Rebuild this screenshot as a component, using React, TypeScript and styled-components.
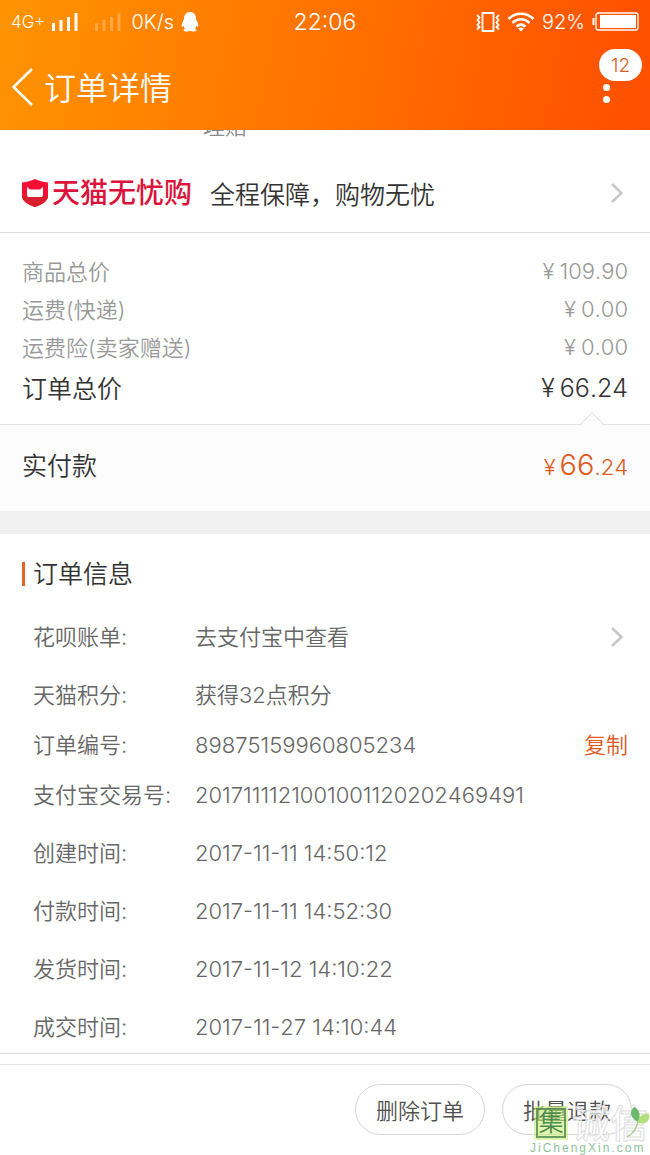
import React from 'react';
import styled, { createGlobalStyle } from 'styled-components';

const GlobalStyle = createGlobalStyle`
  * { box-sizing: border-box; }
  body {
    margin: 0;
    background: #fff;
    color: #666;
    font: 350 22px/30px Inter, "Noto Sans CJK SC", sans-serif;
    font-kerning: none;
  }
  button { font: inherit; font-kerning: inherit; color: inherit; background: none; border: 0; padding: 0; cursor: pointer; }
  h1, h2, dl, dd, dt, p { margin: 0; font-weight: inherit; }
`;

const Page = styled.div`
  position: relative;
  display: flex;
  flex-direction: column;
  min-height: 100vh;
`;

const Header = styled.header`
  background: linear-gradient(100deg, #ff9402 0%, #ff7200 50%, #ff4e00 100%);
  color: #fff;
`;

const StatusBar = styled.div`
  display: grid;
  grid-template-columns: 1fr auto 1fr;
  align-items: center;
  height: 44px;
  padding: 0 11px;
  font-size: 20px;
`;

const StatusGroup = styled.div<{ $end?: boolean }>`
  display: flex;
  align-items: center;
  gap: 7px;
  justify-content: ${(p) => (p.$end ? 'flex-end' : 'flex-start')};
`;

const Network = styled.span`
  font-size: 17px;
`;

const SignalPair = styled.span`
  display: flex;
  gap: 17px;
  margin-right: 3px;
`;

const Clock = styled.time`
  font-size: 23px;
`;

const NavBar = styled.div`
  display: flex;
  align-items: center;
  height: 86px;
  padding: 0 8px 0 11px;
`;

const BackButton = styled.button`
  display: flex;
  margin-right: 10px;
`;

const Title = styled.h1`
  flex: 1;
  padding-top: 4px;
  font-size: 32px;
  line-height: 40px;
`;

const MenuButton = styled.button`
  position: relative;
  display: flex;
  flex-direction: column;
  align-items: flex-start;
  justify-content: center;
  gap: 5px;
  width: 43px;
  height: 76px;
  padding: 12px 0 0 4px;
`;

const Dot = styled.i`
  flex: none;
  width: 7px;
  height: 7px;
  border-radius: 50%;
  background: #fff;
`;

const Badge = styled.span`
  position: absolute;
  top: 0;
  left: 0;
  width: 43px;
  height: 32px;
  border-radius: 16px;
  background: #fff;
  color: #d9601f;
  font-size: 19px;
  line-height: 33px;
`;

const ClippedRow = styled.div`
  display: flex;
  align-items: flex-end;
  height: 11px;
  margin-bottom: 15px;
  padding-left: 203px;
  overflow: hidden;
  color: #8a8a8a;
`;

const Promise = styled.a`
  display: flex;
  align-items: center;
  height: 77px;
  padding: 0 27px 2px 22px;
  border-bottom: 1px solid #ddd;
  color: #333;
  font-size: 25px;
  text-decoration: none;
`;

const Brand = styled.span`
  display: flex;
  align-items: center;
  gap: 4px;
  margin-right: 18px;
  color: #dc143c;
  font-size: 28px;
  font-weight: 500;
`;

const Grow = styled.span`
  flex: 1;
  padding-top: 4px;
`;

const Totals = styled.dl`
  padding: 20px 22px 13px;
`;

const TotalRow = styled.div<{ $strong?: boolean }>`
  display: flex;
  justify-content: space-between;
  align-items: center;
  height: ${(p) => (p.$strong ? 44 : 38)}px;
  color: ${(p) => (p.$strong ? '#333' : '#999')};
  font-size: ${(p) => (p.$strong ? 25 : 22)}px;
`;

const Price = styled.dd`
  display: flex;
  align-items: baseline;
  gap: 5px;
  padding-bottom: 2px;
`;

const Paid = styled.section`
  position: relative;
  display: flex;
  justify-content: space-between;
  align-items: center;
  height: 88px;
  padding: 0 22px 4px;
  border-top: 1px solid #e4e4e4;
  border-bottom: 1px solid #f0f0f0;
  background: #fcfcfc;
  color: #333;
  font-size: 25px;
`;

const Notch = styled.svg`
  position: absolute;
  top: -13px;
  right: 46px;
`;

const PaidPrice = styled.p`
  display: flex;
  align-items: baseline;
  color: #e0591c;
  font-size: 22px;
`;

const PaidWhole = styled.span`
  margin-left: 4px;
  font-size: 29px;
`;

const Divider = styled.div`
  height: 22px;
  background: #f0f0f0;
`;

const Info = styled.section`
  padding: 0 22px;
  border-bottom: 1px solid #d8d8d8;
`;

const InfoTitle = styled.h2`
  display: flex;
  align-items: center;
  gap: 8px;
  height: 79px;
  color: #333;
  font-size: 25px;

  &::before {
    content: '';
    width: 3px;
    height: 24px;
    background: #e8632a;
  }
`;

const InfoList = styled.dl`
  display: flex;
  flex-direction: column;
  gap: 8px;
`;

const InfoGroup = styled.div``;

const InfoRow = styled.div`
  display: flex;
  align-items: center;
  height: 50px;
  padding: 0 0 2px 11px;
`;

const InfoLabel = styled.dt`
  width: 162px;
`;

const InfoValue = styled.dd`
  flex: 1;
  display: flex;
  align-items: center;
  justify-content: space-between;
`;

const CopyButton = styled.button`
  color: #e0591c;
`;

const LinkButton = styled.button`
  flex: 1;
  display: flex;
  align-items: center;
  justify-content: space-between;
  padding-right: 5px;
`;

const Actions = styled.footer`
  display: flex;
  justify-content: flex-end;
  gap: 17px;
  margin-top: 10px;
  padding: 19px 18px 20px;
  border-top: 1px solid #e4e4e4;
`;

const ActionButton = styled.button`
  width: 130px;
  height: 51px;
  padding-top: 2px;
  border: 1px solid #d4d4d4;
  border-radius: 26px;
  color: #505050;
`;

const Watermark = styled.div`
  position: absolute;
  right: 0;
  bottom: 0;
  width: 120px;
  pointer-events: none;
`;

const WatermarkMarks = styled.div`
  display: flex;
  align-items: center;
  gap: 6px;
  height: 36px;
  padding-left: 6px;
`;

const WatermarkSeal = styled.span`
  flex: none;
  width: 30px;
  height: 30px;
  border: 2px solid rgba(70, 125, 70, 0.75);
  outline: 2px solid rgba(200, 240, 120, 0.6);
  background: rgba(200, 240, 120, 0.6);
  color: #4f8a4f;
  font-size: 25px;
  line-height: 25px;
  text-align: center;
`;

const WatermarkName = styled.span`
  color: rgba(255, 255, 255, 0.6);
  font-size: 38px;
  font-weight: 500;
  line-height: 36px;
  white-space: nowrap;
  -webkit-text-stroke: 1px #dedede;
`;

const WatermarkSite = styled.div`
  color: #8cc49a;
  font: 400 12px/14px "Liberation Sans", sans-serif;
  letter-spacing: 2px;
  white-space: nowrap;
`;

const Leaf = styled.svg`
  position: absolute;
  right: 0;
  top: 2px;
`;

const Chevron = () => (
  <svg width="12" height="20" viewBox="0 0 12 20" fill="none" stroke="#c8c8c8" strokeWidth="2.500" aria-hidden="true">
    <path d="M1 1l9.500 9L1 19" />
  </svg>
);

const Signal = ({ faint }: { faint?: boolean }) => (
  <svg width="26" height="19" viewBox="0 0 26 19" fill="#fff" opacity={faint ? 0.25 : 1} aria-hidden="true">
    <path d="M0 10h3v8H0zM7.500 7h3v11h-3zM15 4h3v14h-3zM22.500 0h3v18h-3z" />
  </svg>
);

const totals = [
  { label: '商品总价', amount: '109.90' },
  { label: '运费(快递)', amount: '0.00' },
  { label: '运费险(卖家赠送)', amount: '0.00' },
  { label: '订单总价', amount: '66.24', strong: true },
];

type Item = { label: string; value: string; kind?: 'link' | 'copy' };

const groups: Item[][] = [
  [{ label: '花呗账单:', value: '去支付宝中查看', kind: 'link' }],
  [
    { label: '天猫积分:', value: '获得32点积分' },
    { label: '订单编号:', value: '89875159960805234', kind: 'copy' },
    { label: '支付宝交易号:', value: '2017111121001001120202469491' },
  ],
  [{ label: '创建时间:', value: '2017-11-11 14:50:12' }],
  [{ label: '付款时间:', value: '2017-11-11 14:52:30' }],
  [{ label: '发货时间:', value: '2017-11-12 14:10:22' }],
  [{ label: '成交时间:', value: '2017-11-27 14:10:44' }],
];

export default function App() {
  return (
    <Page>
      <GlobalStyle />
      <Header>
        <StatusBar>
          <StatusGroup>
            <Network>4G+</Network>
            <SignalPair>
              <Signal />
              <Signal faint />
            </SignalPair>
            <span>0K/s</span>
            <svg width="18" height="20" viewBox="0 0 18 20" fill="#fff" aria-hidden="true">
              <path d="M9 0c4 0 6 3 6 6.500 0 1 .5 1.700 1 2.800 1 2 1.600 4 1.200 5.200-.3.700-1.200.2-1.700-.8-.2 1.200-.8 2.200-1.500 3 1.200.5 1.700 1.100 1.400 1.800-.4 1.200-4.700 1.300-6.400.3-1.700 1-6 .9-6.400-.3-.3-.7.200-1.300 1.400-1.800-.7-.8-1.300-1.800-1.500-3-.5 1-1.400 1.500-1.700.8C.4 13.300 1 11.300 2 9.300c.5-1.100 1-1.800 1-2.800C3 3 5 0 9 0z" />
            </svg>
          </StatusGroup>
          <Clock>22:06</Clock>
          <StatusGroup $end>
            <svg width="24" height="20" viewBox="0 0 24 20" fill="none" stroke="#fff" strokeWidth="1.800" aria-hidden="true">
              <path d="M6.500 1h11v18h-11zM1 3l2.500 2.500L1.500 8l2 2.500-2 2.500 2 2L1 17.500M23 3l-2.500 2.500 2 2.500-2 2.500 2 2.500-2 2 2.500 2.500" />
            </svg>
            <svg width="28" height="20" viewBox="0 0 28 20" fill="none" stroke="#fff" strokeWidth="2.500" aria-hidden="true">
              <path d="M1.500 7c7-7 18-7 25 0M5.500 11c5-5 12-5 17 0M9.500 14.500c3-2.500 6-2.500 9 0" />
              <path d="M14 19.500l-3-3c2-1.500 4-1.500 6 0z" fill="#fff" stroke="none" />
            </svg>
            <span>92%</span>
            <svg width="47" height="20" viewBox="0 0 47 20" fill="none" aria-hidden="true">
              <path d="M1.500 6v7" stroke="#fff" strokeWidth="2" />
              <rect x="4" y="1" width="42" height="17" rx="2.500" stroke="#fff" strokeWidth="1.300" />
              <path d="M8 3h36v13H8z" fill="#fff" />
            </svg>
          </StatusGroup>
        </StatusBar>
        <NavBar>
          <BackButton aria-label="返回">
            <svg width="23" height="40" viewBox="0 0 23 40" fill="none" stroke="#fff" strokeWidth="2.500">
              <path d="M21 2L2.500 20 21 38" />
            </svg>
          </BackButton>
          <Title>订单详情</Title>
          <MenuButton aria-label="更多">
            <Dot />
            <Dot />
            <Badge>12</Badge>
          </MenuButton>
        </NavBar>
      </Header>

      <ClippedRow>理赔</ClippedRow>

      <Promise href="#guarantee">
        <Brand>
          <svg width="26" height="28" viewBox="0 0 26 28" aria-hidden="true">
            <path d="M13 0c4 2 8 3 13 3.500V17c0 5-6 8.500-13 11C6 25.500 0 22 0 17V3.500C5 3 9 2 13 0z" fill="#f50f35" />
            <path d="M0 17h26c0 5-6 8.500-13 11C6 25.500 0 22 0 17z" fill="#d81f2c" />
            <path d="M5 8l3 2.500h10L21 8v8q0 2-2 2H7q-2 0-2-2z" fill="#fff" />
          </svg>
          天猫无忧购
        </Brand>
        <Grow>全程保障，购物无忧</Grow>
        <Chevron />
      </Promise>

      <Totals>
        {totals.map((t) => (
          <TotalRow key={t.label} $strong={t.strong}>
            <dt>{t.label}</dt>
            <Price>
              <span>¥</span>
              <span>{t.amount}</span>
            </Price>
          </TotalRow>
        ))}
      </Totals>

      <Paid>
        <Notch width="24" height="14" viewBox="0 0 24 14" aria-hidden="true">
          <path d="M0 13L12 1l12 12v1H0z" fill="#fcfcfc" />
          <path d="M0 13L12 1l12 12" fill="none" stroke="#dcdcdc" />
        </Notch>
        <span>实付款</span>
        <PaidPrice>
          ¥<PaidWhole>66</PaidWhole>.24
        </PaidPrice>
      </Paid>
      <Divider />

      <Info>
        <InfoTitle>订单信息</InfoTitle>
        <InfoList>
          {groups.map((group) => (
            <InfoGroup key={group[0].label}>
              {group.map((item) => (
                <InfoRow key={item.label}>
                  <InfoLabel>{item.label}</InfoLabel>
                  <InfoValue>
                    {item.kind === 'link' ? (
                      <LinkButton>
                        {item.value}
                        <Chevron />
                      </LinkButton>
                    ) : (
                      item.value
                    )}
                    {item.kind === 'copy' && <CopyButton>复制</CopyButton>}
                  </InfoValue>
                </InfoRow>
              ))}
            </InfoGroup>
          ))}
        </InfoList>
      </Info>

      <Actions>
        <ActionButton>删除订单</ActionButton>
        <ActionButton>批量退款</ActionButton>
      </Actions>

      <Watermark>
        <WatermarkMarks>
          <WatermarkSeal>集</WatermarkSeal>
          <WatermarkName>诚信</WatermarkName>
        </WatermarkMarks>
        <WatermarkSite>JiChengXin.com</WatermarkSite>
        <Leaf width="24" height="32" viewBox="0 0 24 32" aria-hidden="true">
          <path d="M8 0c6 3 7 8 4 15C6 12 2 6 8 0z" fill="#6cb86c" />
          <path d="M12 16c1-7 5-10 11-9 1 7-3 11-11 9z" fill="#b4e07c" />
          <path d="M12 14c-1 7-4 12-11 16" fill="none" stroke="#a8cc90" strokeWidth="1.500" />
        </Leaf>
      </Watermark>
    </Page>
  );
}
